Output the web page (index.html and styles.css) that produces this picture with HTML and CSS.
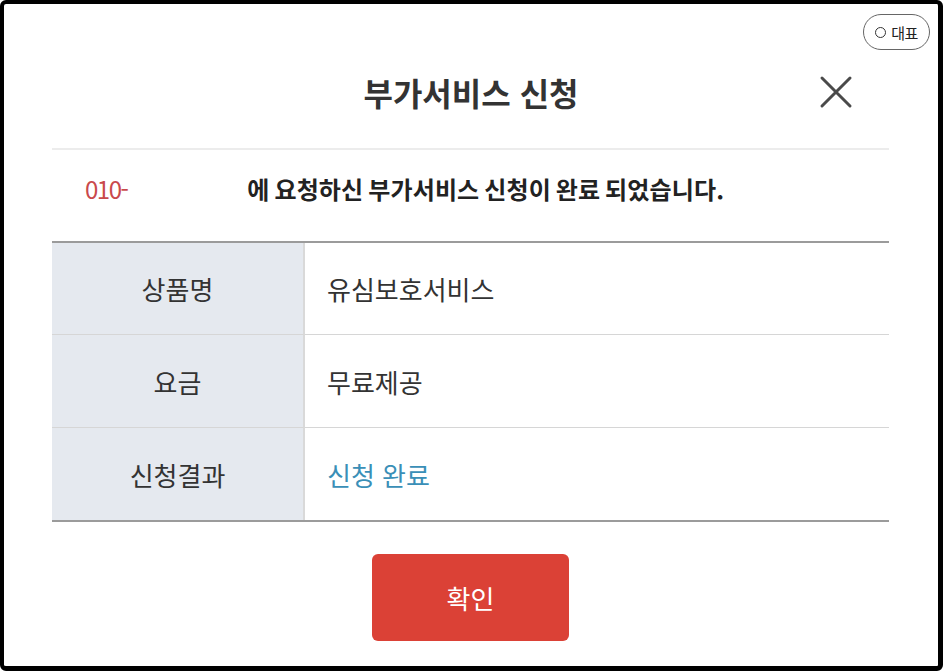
FILE: index.html
```html
<!DOCTYPE html>
<html lang="ko">
<head>
<meta charset="utf-8">
<title>부가서비스 신청</title>
<link rel="stylesheet" href="styles.css">
</head>
<body>
<div class="frame">
  <div class="topbar">
    <span class="badge"><span class="badge-dot"></span>대표</span>
  </div>
  <div class="header">
    <span></span>
    <h1 class="title">부가서비스 신청</h1>
    <button class="close" aria-label="닫기">
      <svg width="34" height="34" viewBox="0 0 34 34"><path d="M3 3 L31 31 M31 3 L3 31" stroke="#4a4a4a" stroke-width="3" stroke-linecap="round" fill="none"/></svg>
    </button>
  </div>
  <div class="content">
    <div class="sep"></div>
    <p class="msg"><span class="phone">010-</span><span class="mask"></span><span class="msg-text">에 요청하신 부가서비스 신청이 완료 되었습니다.</span></p>
    <div class="grid">
      <div class="th">상품명</div>
      <div class="td">유심보호서비스</div>
      <div class="th">요금</div>
      <div class="td">무료제공</div>
      <div class="th">신청결과</div>
      <div class="td done">신청 완료</div>
    </div>
    <div class="actions">
      <button class="ok">확인</button>
    </div>
  </div>
</div>
</body>
</html>
```
FILE: styles.css
```css
* { box-sizing: border-box; }
html, body { margin: 0; padding: 0; background: #fff; }
body {
  font-family: "Noto Sans CJK KR", "Noto Sans", sans-serif;
  color: #333;
}
.frame {
  width: 943px;
  height: 671px;
  border-style: solid;
  border-color: #000;
  border-width: 4px 5px 5px 4px;
  border-radius: 6px;
  background: #fff;
  overflow: hidden;
}
.topbar {
  display: flex;
  justify-content: flex-end;
  padding: 10px 8px 0 0;
}
.badge {
  display: inline-flex;
  align-items: center;
  gap: 5px;
  height: 36px;
  width: 67px;
  justify-content: center;
  border: 1px solid #666;
  border-radius: 18px;
  font-size: 15px;
  color: #222;
  letter-spacing: -0.5px;
}
.badge-dot {
  width: 11px;
  height: 11px;
  border: 1.5px solid #333;
  border-radius: 50%;
}
.header {
  display: grid;
  grid-template-columns: 1fr auto 1fr;
  align-items: center;
  height: 88px;
  padding: 0 48px 4px 48px;
}
.title {
  margin: 0;
  font-size: 32px;
  font-weight: 700;
  letter-spacing: 0;
  color: #333;
  line-height: 40px;
}
.close {
  justify-self: end;
  margin-right: 37px;
  background: none;
  border: 0;
  padding: 0;
  width: 34px;
  height: 34px;
  display: flex;
}
.content {
  padding: 10px 49px 0 48px;
}
.sep {
  height: 2px;
  background: #ececec;
}
.msg {
  margin: 0;
  height: 91px;
  padding: 0 0 14px 33px;
  line-height: 30px;
  font-size: 24px;
  display: flex;
  align-items: center;
}
.phone {
  color: #c9494b;
  letter-spacing: -1.5px;
}
.mask {
  display: inline-block;
  width: 120px;
}
.msg-text {
  font-weight: 700;
  color: #222;
  letter-spacing: 0.15px;
  word-spacing: -2px;
}
.grid {
  display: grid;
  grid-template-columns: 253px 1fr;
  grid-template-rows: 91px 93px 93px;
  border-top: 2px solid #9b9b9b;
  border-bottom: 2px solid #9b9b9b;
}
.th, .td {
  display: flex;
  align-items: center;
  font-size: 26px;
  letter-spacing: 0;
  border-top: 1px solid #d6d6d6;
}
.th:first-child, .th:first-child + .td { border-top: 0; }
.th {
  justify-content: center;
  background: #e5e9ef;
  border-right: 2px solid #d9d9d9;
  color: #333;
}
.td {
  padding-left: 22px;
  color: #333;
}
.td.done { color: #3a8fb7; }
.actions {
  display: flex;
  justify-content: center;
  padding-top: 32px;
}
.ok {
  width: 197px;
  height: 87px;
  border: 0;
  border-radius: 6px;
  background: #db4136;
  color: #fff;
  font-family: inherit;
  font-size: 26px;
  letter-spacing: 0;
}
```
